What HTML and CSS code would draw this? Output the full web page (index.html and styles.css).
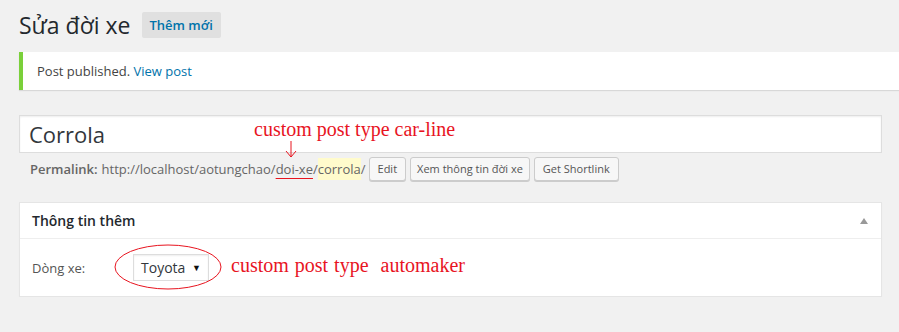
FILE: index.html
```html
<!DOCTYPE html>
<html lang="vi">
<head>
<meta charset="utf-8">
<title>Sửa đời xe</title>
<link rel="stylesheet" href="styles.css">
</head>
<body>
<div class="wrap">
  <div class="heading">
    <h1 class="page-title">Sửa đời xe</h1>
    <a class="page-title-action">Thêm mới</a>
  </div>

  <div class="notice">
    <p>Post published. <a class="link">View post</a></p>
  </div>

  <div class="titlediv">
    <div class="title-input">Corrola</div>
    <div class="permalink">
      <strong class="perm-label">Permalink:</strong>
      <span class="perm-url">http://localhost/aotungchao/<span class="underlined">doi-xe</span>/<span class="slug">corrola</span>/</span>
      <span class="btn btn-first">Edit</span>
      <span class="btn btn-view">Xem thông tin đời xe</span>
      <span class="btn btn-gap">Get Shortlink</span>
    </div>
    <div class="note note-carline">custom post type car-line</div>
    <svg class="arrow" width="12" height="17" viewBox="0 0 12 17">
      <path d="M6 0 V16 M1 10 L6 16 L11 10" fill="none" stroke="#e8141f" stroke-width="1"/>
    </svg>
  </div>

  <div class="postbox">
    <div class="hndle">
      <h2 class="hndle-title">Thông tin thêm</h2>
      <span class="toggle"></span>
    </div>
    <div class="inside">
      <span class="field-label">Dòng xe:</span>
      <div class="select-wrap">
        <div class="select">Toyota <span class="caret">▼</span></div>
        <svg class="ellipse" width="108" height="46" viewBox="0 0 108 46">
          <ellipse cx="54" cy="23" rx="53" ry="22" fill="none" stroke="#e8141f" stroke-width="1"/>
        </svg>
      </div>
      <span class="note note-maker">custom post type&nbsp; automaker</span>
    </div>
  </div>
</div>
</body>
</html>
```

FILE: styles.css
```css
html, body {
  margin: 0;
  padding: 0;
  background: #f1f1f1;
}

body {
  font-family: "Open Sans", "Noto Sans", sans-serif;
  color: #444;
  font-size: 13px;
}

.wrap {
  padding: 0 17px 0 19px;
  position: relative;
}

.heading {
  display: flex;
  align-items: center;
  height: 28px;
  margin-top: 11px;
}

.page-title {
  margin: 0;
  font-size: 23px;
  font-weight: 400;
  color: #23282d;
  line-height: 28px;
}

.page-title-action {
  margin-left: 11px;
  background: #e0e0e0;
  color: #0073aa;
  font-size: 13px;
  font-weight: 600;
  height: 26px;
  line-height: 26px;
  padding: 0 8px;
  border-radius: 2px;
}

.notice {
  margin: 13px -17px 0 0;
  background: #fff;
  border-left: 4px solid #7ad03a;
  box-shadow: 0 1px 1px rgba(0, 0, 0, 0.1);
  height: 38px;
  display: flex;
  align-items: center;
}

.notice p {
  margin: 0 0 0 14px;
  font-size: 13px;
  color: #444;
}

.link {
  color: #0073aa;
}

.titlediv {
  position: relative;
  margin-top: 25px;
}

.title-input {
  height: 36px;
  border: 1px solid #ddd;
  background: #fff;
  font-size: 22px;
  line-height: 36px;
  color: #32373c;
  padding-left: 9px;
  box-shadow: inset 0 1px 2px rgba(0, 0, 0, 0.07);
}

.permalink {
  display: flex;
  align-items: center;
  margin-top: 4px;
  padding-left: 11px;
  font-size: 13px;
  color: #666;
  height: 24px;
}

.perm-label {
  font-weight: 600;
  color: #666;
  margin-right: 4px;
}

.underlined {
  text-decoration: underline;
  text-decoration-color: #e8141f;
  text-underline-offset: 4px;
  text-decoration-thickness: 1px;
}

.slug {
  background: #fffbcc;
  padding: 2px 0;
}

.btn {
  margin-left: 4px;
  height: 22px;
  line-height: 22px;
  padding: 0 8px;
  border: 1px solid #ccc;
  border-radius: 3px;
  background: #f7f7f7;
  box-shadow: 0 1px 0 #ccc;
  font-size: 11px;
  color: #555;
}

.btn-first {
  margin-left: 3px;
}

.btn-view {
  padding: 0 6px;
}

.btn-gap {
  margin-left: 4px;
}

.note {
  font-family: "Liberation Serif", "Times New Roman", serif;
  color: #e8141f;
  font-size: 20px;
  white-space: nowrap;
}

.note-carline {
  position: absolute;
  left: 235px;
  top: 1px;
  line-height: 26px;
}

.arrow {
  position: absolute;
  left: 266px;
  top: 26px;
}

.postbox {
  margin-top: 21px;
  background: #fff;
  border: 1px solid #e5e5e5;
  box-shadow: 0 1px 1px rgba(0, 0, 0, 0.04);
}

.hndle {
  display: flex;
  align-items: center;
  justify-content: space-between;
  height: 35px;
  border-bottom: 1px solid #eee;
  padding: 0 13px 0 12px;
}

.hndle-title {
  margin: 0;
  font-size: 14px;
  font-weight: 600;
  color: #23282d;
}

.toggle {
  width: 0;
  height: 0;
  border-left: 4px solid transparent;
  border-right: 4px solid transparent;
  border-bottom: 6px solid #999;
}

.inside {
  display: flex;
  align-items: center;
  height: 57px;
  padding-left: 12px;
}

.field-label {
  width: 101px;
  font-size: 13px;
  color: #555;
}

.select-wrap {
  position: relative;
  display: flex;
}

.select {
  box-sizing: border-box;
  width: 76px;
  height: 27px;
  border: 1px solid #ddd;
  box-shadow: inset 0 1px 2px rgba(0, 0, 0, 0.07);
  display: flex;
  align-items: center;
  justify-content: space-between;
  padding: 0 7px 0 7px;
  font-size: 14px;
  color: #32373c;
}

.caret {
  font-size: 9px;
  color: #111;
}

.ellipse {
  position: absolute;
  left: -19px;
  top: -10px;
}

.note-maker {
  margin-left: 22px;
  margin-top: -4px;
  word-spacing: 1px;
}
```
